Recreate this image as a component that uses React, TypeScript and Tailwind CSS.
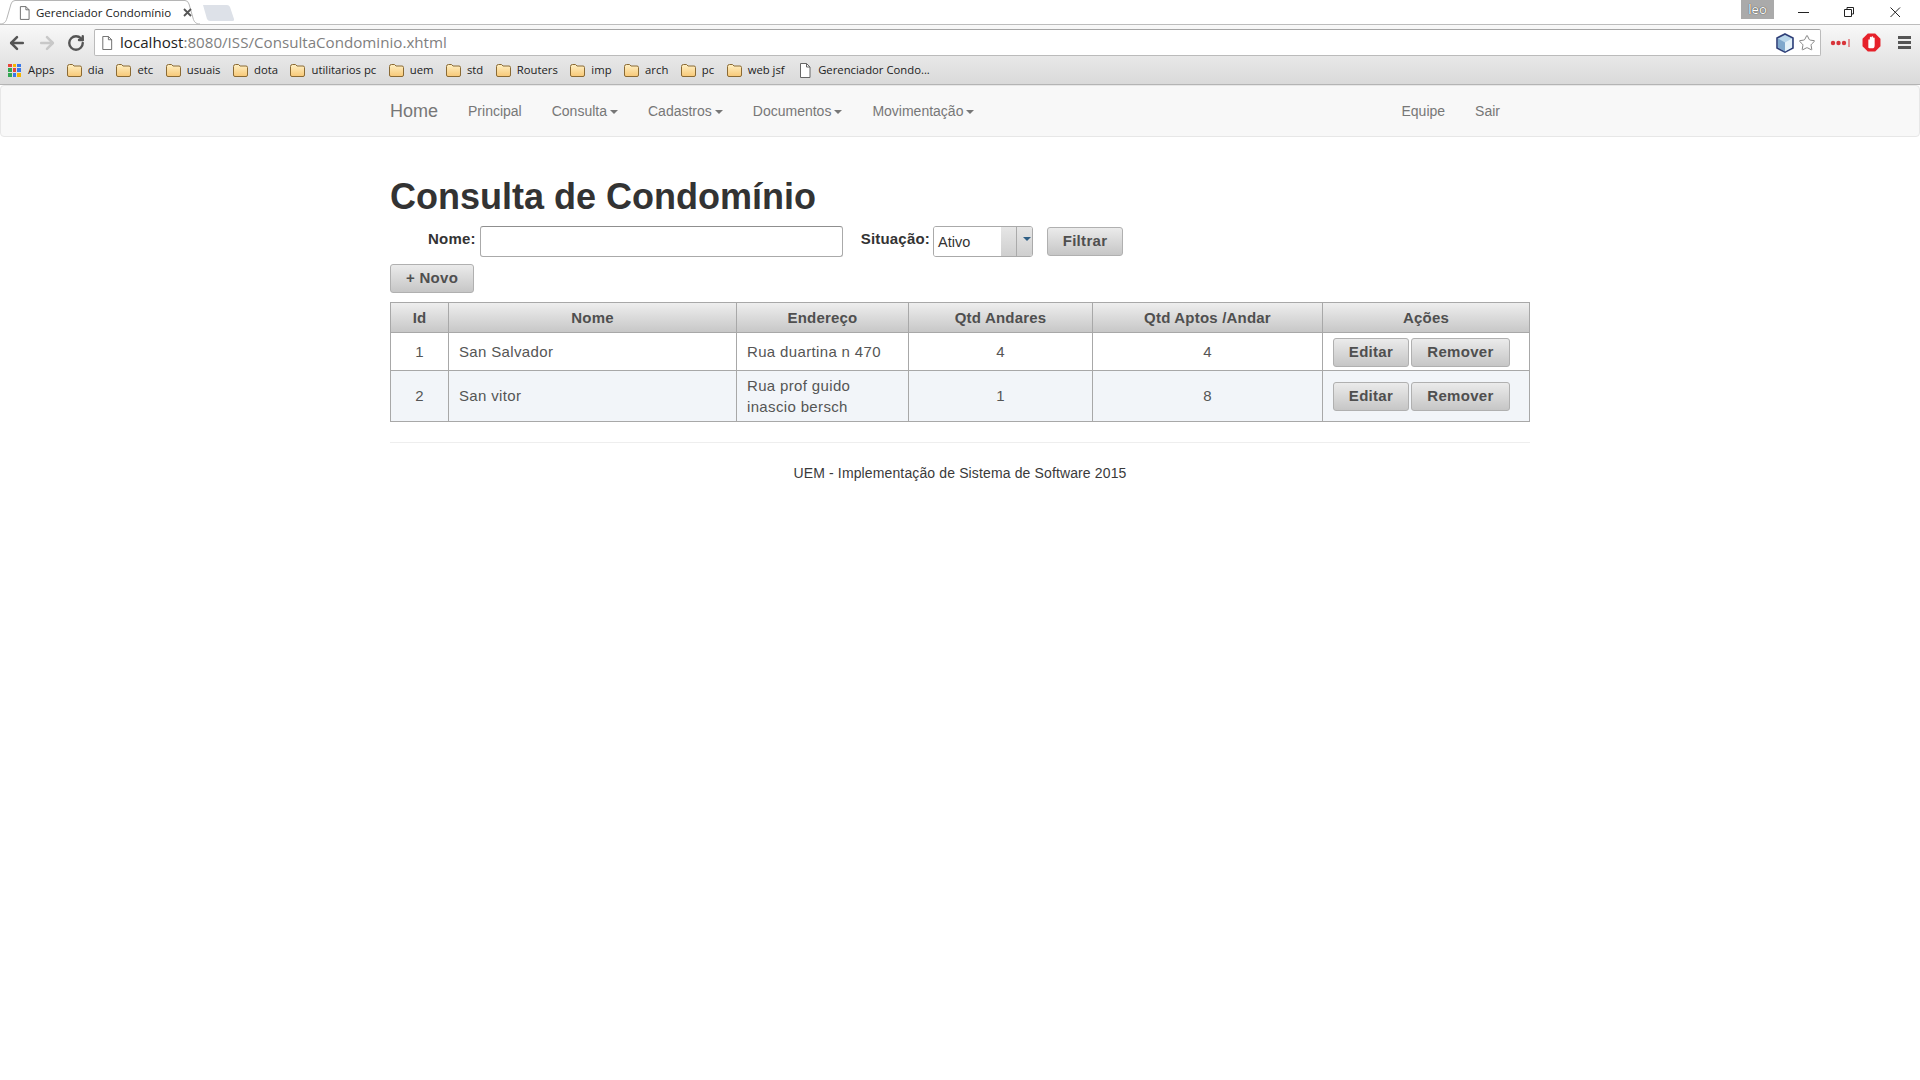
import { ArrowLeft, ArrowRight, RotateCw, Star } from 'lucide-react';

const UI_FONT = "font-['Open_Sans','Noto_Sans',sans-serif]";

const BOOKMARKS = ['dia', 'etc', 'usuais', 'dota', 'utilitarios pc', 'uem', 'std', 'Routers', 'imp', 'arch', 'pc', 'web jsf'];

function PageIcon({ className }: { className?: string }) {
  return (
    <svg viewBox="0 0 12 15" className={className} fill="#fff" stroke="#666" strokeWidth="1">
      <path d="M1.5 .5h6l3.5 3.5v10.500h-9.500z" />
      <path d="M7.500 .5v3.500h3.500" fill="none" />
    </svg>
  );
}

function FolderIcon() {
  return (
    <svg viewBox="0 0 15 13" className="w-[15px] h-[13px] shrink-0">
      <defs>
        <linearGradient id="folder" x1="0" y1="0" x2="0" y2="1">
          <stop offset="0" stopColor="#fff0c4" />
          <stop offset="1" stopColor="#f7c877" />
        </linearGradient>
      </defs>
      <path d="M.5 2.500q0-2 2-2h3l1.500 1.500h6q1.500 0 1.500 1.500v7.500q0 1.500-1.500 1.500h-11q-1.500 0-1.500-1.500z" fill="url(#folder)" stroke="#8a6a34" />
    </svg>
  );
}

function AppsIcon() {
  const colors = ['#e8453c', '#f4b400', '#3b78e7', '#34a853', '#e8453c', '#3b78e7', '#34a853', '#3b78e7', '#f4b400'];
  return (
    <div className="grid grid-cols-3 gap-px w-[13px] h-[13px] shrink-0">
      {colors.map((c, i) => (
        <span key={i} style={{ backgroundColor: c }} />
      ))}
    </div>
  );
}

function Caret() {
  return <span className="inline-block ml-[3px] align-middle border-x-4 border-x-transparent border-t-4 border-t-[#777]" />;
}

function NavLink({ label, caret }: { label: string; caret?: boolean }) {
  return (
    <a className="px-[15px] text-[14px] text-[#777] leading-[50px]">
      {label}
      {caret && <Caret />}
    </a>
  );
}

function GrayButton({ label, className }: { label: string; className: string }) {
  return (
    <button className={`h-[29px] rounded-[3px] border border-[#b0b0b0] bg-linear-to-b from-[#ebebeb] to-[#c6c6c6] text-[15px] font-bold tracking-[0.3px] text-[#4f4f4f] flex items-center justify-center ${className}`}>
      {label}
    </button>
  );
}

function ChromeBar() {
  return (
    <div className={`${UI_FONT} text-[11.3px] text-[#222]`}>
      {/* abas */}
      <div className="h-[25px] flex items-end border-b border-[#bdbdbd] bg-white relative">
        <div className="relative w-[207px] h-[25px] -mb-px flex items-center pl-[19px]">
          <svg viewBox="0 0 207 25" className="absolute inset-0 w-[207px] h-[25px]">
            <path d="M0 24c4 0 6-2 7-6l4-14q1-3.500 4-3.500h170q3 0 4 3.500l4 14c1 4 3 6 7 6" fill="#fff" stroke="#b5b5b5" />
          </svg>
          <PageIcon className="relative w-[11px] h-[14px]" />
          <span className="relative ml-[6px] text-[11.500px] w-[138px] whitespace-nowrap">Gerenciador Condomínio</span>
          <svg viewBox="0 0 9 9" className="relative ml-[9px] w-[9px] h-[9px]" stroke="#555" strokeWidth="1.800" fill="none">
            <path d="M1 1l7 7m0-7l-7 7" />
          </svg>
        </div>
        <svg viewBox="0 0 32 17" className="w-[32px] h-[17px] mb-[3px] -ml-[4px]">
          <path d="M0 1h24q2 0 3 2l4 12q.5 2-2 2h-22q-2 0-3-2z" fill="#dde1e8" />
        </svg>
        <div className="ml-auto h-[24px] flex items-start self-start">
          <div className="w-[33px] h-[19px] bg-[#aaaaaa] text-white text-[13px] leading-[18px] text-center [text-shadow:0_0_1px_#000]">leo</div>
          <svg viewBox="0 0 146 24" className="w-[146px] h-[24px]" fill="none" stroke="#222" strokeWidth="1">
            <path d="M24 12.500h11" />
            <path d="M70.500 9.500h7v7h-7z" />
            <path d="M73 9.500v-2h6.500v6.500h-2" />
            <path d="M116.500 7.500l9.500 9.500m0-9.500l-9.500 9.500" />
          </svg>
        </div>
      </div>

      <div className="bg-linear-to-b from-[#f8f8f8] to-[#d9d9d9]">
        {/* barra de endereco */}
        <div className="h-[35px] flex items-center">
          <div className="w-[94px] flex items-center pl-[7px] gap-[10px] shrink-0">
            <ArrowLeft size={20} strokeWidth={3} className="text-[#555]" />
            <ArrowRight size={20} strokeWidth={3} className="text-[#c8c8c8]" />
            <RotateCw size={18} strokeWidth={3.2} className="text-[#555]" />
          </div>
          <div className="w-[727px] grow h-[27px] bg-white rounded-[2px] border border-[#bbb] border-t-[#a5a5a5] flex items-center pl-[6px] pr-[1px]">
            <PageIcon className="w-[12px] h-[14px] shrink-0" />
            <span className="ml-[7px] text-[15.150px] leading-none text-[#222]">
              localhost<span className="text-[#808080]">:8080/ISS/ConsultaCondominio.xhtml</span>
            </span>
            <svg viewBox="0 0 20 20" className="w-[20px] h-[20px] ml-auto">
              <path d="M10 1l8 4v10l-8 4-8-4V5z" fill="#b9d6ea" stroke="#2f3f78" strokeWidth="1.600" />
              <path d="M10 9.500L3 5.500v9l7 4z" fill="#7fa8cc" />
              <path d="M10 9.500l7-4v9l-7 4z" fill="#e4f1f8" />
            </svg>
            <Star size={18} strokeWidth={1.2} className="text-[#777] ml-[3px] mr-[3px]" />
          </div>
          <div className="w-[99px] shrink-0 flex items-center pl-[9px]">
            <svg viewBox="0 0 20 8" className="w-[20px] h-[8px]">
              <circle cx="3" cy="4" r="2.200" fill="#d8343a" />
              <circle cx="8.500" cy="4" r="2.200" fill="#d8343a" />
              <circle cx="14" cy="4" r="2.200" fill="#d8343a" />
              <path d="M19 0v8" stroke="#d8343a" />
            </svg>
            <svg viewBox="0 0 18 18" className="w-[19px] h-[19px] ml-[12px]">
              <path d="M5.500.5h7l5 5v7l-5 5h-7l-5-5v-7z" fill="#e6212a" />
              <path d="M6 14V7q0-1 .7-1t.7 1V4.500q0-1 .8-1t.8 1V4q0-1 .8-1t.8 1v1q0-.8.7-.8t.7.8v6.500q0 3-2.500 3H8q-1 0-2-.5z" fill="#fff" />
            </svg>
            <div className="ml-[17px] w-[13px] flex flex-col gap-[2px]">
              <span className="h-[3px] bg-[#555]" />
              <span className="h-[3px] bg-[#555]" />
              <span className="h-[3px] bg-[#555]" />
            </div>
          </div>
        </div>

        {/* favoritos */}
        <div className="h-[25px] pb-[4px] flex items-center pl-[8px] border-b border-[#b4b4b4] gap-[12.500px] whitespace-nowrap">
          <div className="flex items-center gap-[7px]">
            <AppsIcon />
            <span>Apps</span>
          </div>
          {BOOKMARKS.map((b) => (
            <div key={b} className="flex items-center gap-[6px]">
              <FolderIcon />
              <span>{b}</span>
            </div>
          ))}
          <div className="flex items-center gap-[7px] ml-[2px]">
            <PageIcon className="w-[12px] h-[15px]" />
            <span>Gerenciador Condo...</span>
          </div>
        </div>
      </div>
    </div>
  );
}

function Navbar() {
  return (
    <nav className="h-[52px] bg-[#f8f8f8] border border-[#e7e7e7] rounded-[4px]">
      <div className="w-[1140px] mx-auto flex items-center h-[50px]">
        <a className="text-[18px] text-[#777] pr-[15px]">Home</a>
        <NavLink label="Principal" />
        <NavLink label="Consulta" caret />
        <NavLink label="Cadastros" caret />
        <NavLink label="Documentos" caret />
        <NavLink label="Movimentação" caret />
        <div className="ml-auto flex pr-[15px]">
          <NavLink label="Equipe" />
          <NavLink label="Sair" />
        </div>
      </div>
    </nav>
  );
}

const ROWS = [
  { id: 1, nome: 'San Salvador', end: ['Rua duartina n 470'], andares: 4, aptos: 4 },
  { id: 2, nome: 'San vitor', end: ['Rua prof guido', 'inascio bersch'], andares: 1, aptos: 8 },
];

const TH = 'border border-[#a8a8a8] h-[30px] p-0 pt-[2px] text-[15px] font-bold tracking-[0.2px] text-[#4f4f4f] text-center';
const TD = 'border border-[#a8a8a8] p-0 text-[15px] tracking-[0.35px] text-[#555]';

function Table() {
  return (
    <table className="w-[1139px] table-fixed border-collapse mt-[9px]">
      <colgroup>
        <col className="w-[58px]" />
        <col className="w-[288px]" />
        <col className="w-[172px]" />
        <col className="w-[184px]" />
        <col className="w-[230px]" />
        <col className="w-[207px]" />
      </colgroup>
      <thead>
        <tr className="bg-linear-to-b from-[#eeeeee] to-[#c6c6c6]">
          {['Id', 'Nome', 'Endereço', 'Qtd Andares', 'Qtd Aptos /Andar', 'Ações'].map((h) => (
            <th key={h} className={TH}>{h}</th>
          ))}
        </tr>
      </thead>
      <tbody>
        {ROWS.map((r) => {
          // primeira linha fica 1px mais baixa que o centro
          const pad = r.id === 1 ? 'pt-[2px]' : '';
          return (
            <tr key={r.id} className={r.id % 2 === 0 ? 'bg-[#f2f5f9] h-[51px]' : 'bg-white h-[38px]'}>
              <td className={`${TD} ${pad} text-center`}>{r.id}</td>
              <td className={`${TD} ${pad} pl-[10px]`}>{r.nome}</td>
              <td className={`${TD} pl-[10px] leading-[21px]`}>
                {r.end.map((l) => (
                  <div key={l}>{l}</div>
                ))}
              </td>
              <td className={`${TD} ${pad} text-center`}>{r.andares}</td>
              <td className={`${TD} ${pad} text-center`}>{r.aptos}</td>
              <td className={`${TD} ${pad} pl-[10px]`}>
                <div className="flex gap-[2px]">
                  <GrayButton label="Editar" className="w-[76px]" />
                  <GrayButton label="Remover" className="w-[99px]" />
                </div>
              </td>
            </tr>
          );
        })}
      </tbody>
    </table>
  );
}

function Filtro() {
  return (
    <div className="flex items-start h-[31px] pl-[38px]">
      <label className="text-[15px] font-bold tracking-[0.2px] text-[#333] mt-[2px]">Nome:</label>
      <input className="ml-[4px] w-[363px] h-[31px] bg-white rounded-[3px] border border-[#aaa] border-t-[#8f8f8f]" />
      <label className="ml-[18px] text-[15px] font-bold tracking-[0.2px] text-[#333] mt-[2px]">Situação:</label>
      <div className="ml-[3px] w-[100px] h-[31px] rounded-[3px] border border-[#aaa] flex overflow-hidden">
        <span className="w-[67px] bg-white text-[14.500px] text-[#333] pl-[4px] leading-[31px]">Ativo</span>
        <span className="w-[16px] bg-linear-to-b from-[#e6e6e6] to-[#cfcfcf] border-r border-[#aaa]" />
        <span className="grow bg-linear-to-b from-[#e6e6e6] to-[#cfcfcf] flex justify-end pr-[1px] pt-[10px]">
          <span className="border-x-[4px] border-x-transparent border-t-[4px] border-t-[#2f5f85] h-0" />
        </span>
      </div>
      <GrayButton label="Filtrar" className="ml-[14px] w-[76px] mt-px" />
    </div>
  );
}

export default function App() {
  return (
    <div className="min-h-screen bg-white font-['Liberation_Sans',Arial,sans-serif]">
      <ChromeBar />
      <Navbar />
      <main className="w-[1140px] mx-auto pt-[40px]">
        <h1 className="text-[36px] leading-[40px] font-bold text-[#333] mb-[9px]">Consulta de Condomínio</h1>
        <Filtro />
        <GrayButton label="+ Novo" className="w-[84px] mt-[7px]" />
        <Table />
        <hr className="mt-[20px] border-[#eeeeee]" />
        <p className="mt-[20px] text-center text-[14px] tracking-[0.13px] leading-[20px] text-[#3a3a3a]">UEM - Implementação de Sistema de Software 2015</p>
      </main>
    </div>
  );
}
